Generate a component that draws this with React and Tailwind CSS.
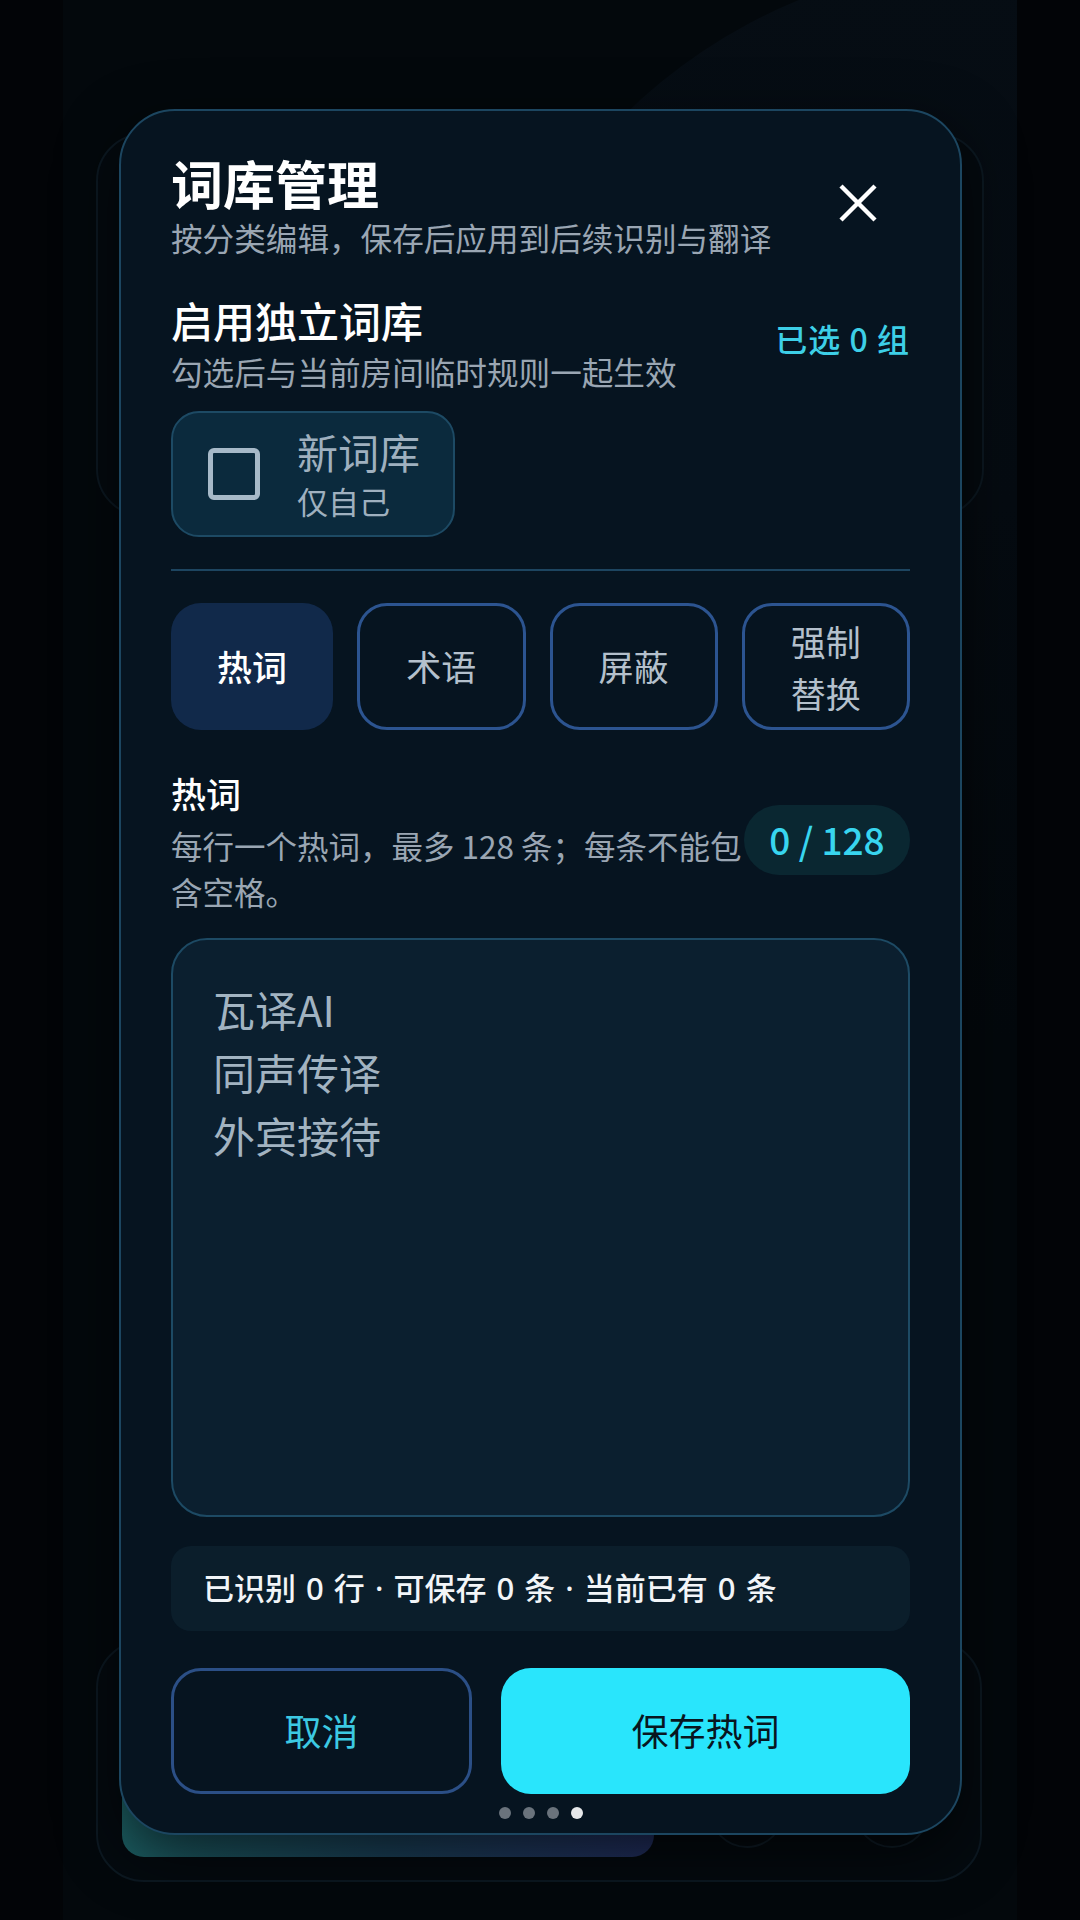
import React from "react";

export default function App() {
  return (
    <div className="relative w-[1080px] h-[1920px] overflow-hidden bg-[#020407] font-['Noto_Sans_CJK_SC','Noto_Sans',sans-serif]">
      {/* background app (dimmed) */}
      <div className="relative ml-[63px] w-[954px] h-[1920px] overflow-hidden bg-[#03080c] flex flex-col">
        <div className="absolute left-[400px] top-[-40px] w-[1080px] h-[1080px] rounded-full bg-gradient-to-b from-[#060d14] via-[#050b11] to-[#03080c]" />
        <div className="relative mt-[133px] ml-[33px] w-[888px] h-[384px] rounded-[48px] border-2 border-[#0c1821] bg-[#040a0f]" />
        <div className="relative mt-[1123px] ml-[33px] w-[886px] h-[242px] rounded-[48px] border-2 border-[#0c1821] bg-[#040a0f] flex items-end pb-[23px] pl-[24px] gap-[55px]">
          <div className="w-[532px] h-[150px] rounded-b-[22px] bg-gradient-to-r from-[#1c5e62] via-[#1a4058] to-[#212e5e]" />
          <div className="flex gap-[69px] mb-[9px]">
            <div className="w-[76px] h-[76px] rounded-full border-2 border-[#0f1c26]" />
            <div className="w-[76px] h-[76px] rounded-full border-2 border-[#0f1c26]" />
          </div>
        </div>
      </div>

      {/* modal */}
      <div className="absolute left-[119px] top-[109px] w-[843px] h-[1726px] rounded-[56px] border-2 border-[#1c4660] bg-[#061420] shadow-[0_20px_60px_rgba(0,0,0,0.6)] px-[50px] pt-[42px] flex flex-col">
        {/* header */}
        <div className="flex justify-between h-[106px]">
          <div className="flex flex-col">
            <div className="text-[52px] leading-[60px] font-bold text-white">词库管理</div>
            <div className="mt-[2px] text-[31.6px] leading-[44px] text-[#9aa6b3]">按分类编辑，保存后应用到后续识别与翻译</div>
          </div>
          <div className="self-start mt-[31px] mr-[33px] w-[38px] h-[38px]">
            <svg width="38" height="38" viewBox="0 0 38 38">
              <line x1="2" y1="2" x2="36" y2="36" stroke="#ffffff" strokeWidth="4.5" />
              <line x1="36" y1="2" x2="2" y2="36" stroke="#ffffff" strokeWidth="4.5" />
            </svg>
          </div>
        </div>

        {/* independent lexicon */}
        <div className="mt-[35px] flex justify-between">
          <div className="flex flex-col">
            <div className="text-[42px] leading-[52px] font-medium text-white">启用独立词库</div>
            <div className="mt-[3px] text-[31.6px] leading-[44px] text-[#9aa6b3]">勾选后与当前房间临时规则一起生效</div>
          </div>
          <div className="self-start mt-[24px] text-[32px] leading-[40px] font-medium tracking-[1px] text-[#3dcfe7]">已选 0 组</div>
        </div>

        {/* checkbox card */}
        <div className="mt-[18px] w-[284px] h-[126px] rounded-[28px] border-2 border-[#1d4a64] bg-[#0b2a3d] flex items-center pl-[35px]">
          <div className="w-[52px] h-[52px] rounded-[6px] border-[5px] border-[#a7b9c8]" />
          <div className="ml-[37px] flex flex-col">
            <div className="text-[41px] leading-[48px] text-[#9fb0bf]">新词库</div>
            <div className="mt-[5px] text-[31px] leading-[42px] text-[#9fb0bf]">仅自己</div>
          </div>
        </div>

        {/* divider */}
        <div className="mt-[32px] h-[2px] bg-[#1d4560]" />

        {/* tabs */}
        <div className="mt-[32px] flex gap-[24px] h-[127px]">
          <div className="flex-1 rounded-[30px] bg-[#11294a] flex items-center justify-center text-[35px] font-medium text-white">热词</div>
          <div className="flex-1 rounded-[30px] border-[3px] border-[#2c5490] flex items-center justify-center text-[35px] text-[#b4c0cc]">术语</div>
          <div className="flex-1 rounded-[30px] border-[3px] border-[#2c5490] flex items-center justify-center text-[35px] text-[#b4c0cc]">屏蔽</div>
          <div className="flex-1 rounded-[30px] border-[3px] border-[#2c5490] flex flex-col items-center justify-center text-[35px] leading-[52px] text-[#b4c0cc]">
            <span>强制</span>
            <span>替换</span>
          </div>
        </div>

        {/* hotword section */}
        <div className="mt-[40px] flex">
          <div className="flex-1 flex flex-col">
            <div className="text-[35px] leading-[46px] font-medium text-white">热词</div>
            <div className="mt-[6px] text-[31.5px] leading-[46px] text-[#9aa6b3]">
              <div className="whitespace-nowrap">每行一个热词，最多 128 条；每条不能包</div>
              <div>含空格。</div>
            </div>
          </div>
          <div className="self-start mt-[35px] w-[166px] h-[70px] rounded-full bg-[#0a2731] flex items-center justify-center text-[37px] font-medium text-[#38d5ef]">0 / 128</div>
        </div>

        {/* textarea */}
        <div className="mt-[24px] h-[579px] rounded-[36px] border-2 border-[#1d4a64] bg-[#0b1f2f] pl-[40px] pt-[37px] text-[42px] leading-[63px] text-[#a2b3c1]">
          <div>瓦译AI</div>
          <div>同声传译</div>
          <div>外宾接待</div>
        </div>

        {/* stats */}
        <div className="mt-[29px] h-[85px] rounded-[20px] bg-[#0b1e2b] flex items-center pl-[32px] text-[31px] font-medium text-[#f2f5f8] font-['Noto_Sans','Noto_Sans_CJK_SC',sans-serif] [word-spacing:2px]">
          已识别 0 行 · 可保存 0 条 · 当前已有 0 条
        </div>

        {/* buttons */}
        <div className="mt-[37px] flex gap-[29px] h-[126px]">
          <div className="w-[301px] rounded-[30px] border-[3px] border-[#2b4f86] flex items-center justify-center text-[37px] text-[#3cc9e2]">取消</div>
          <div className="flex-1 rounded-[30px] bg-[#29e5fc] flex items-center justify-center text-[37px] text-[#08161f]">保存热词</div>
        </div>

        {/* dots */}
        <div className="mt-[13px] flex justify-center gap-[12px]">
          <div className="w-[12px] h-[12px] rounded-full bg-[#6a737c]" />
          <div className="w-[12px] h-[12px] rounded-full bg-[#6a737c]" />
          <div className="w-[12px] h-[12px] rounded-full bg-[#6a737c]" />
          <div className="w-[12px] h-[12px] rounded-full bg-[#e6e8ea]" />
        </div>
      </div>
    </div>
  );
}
